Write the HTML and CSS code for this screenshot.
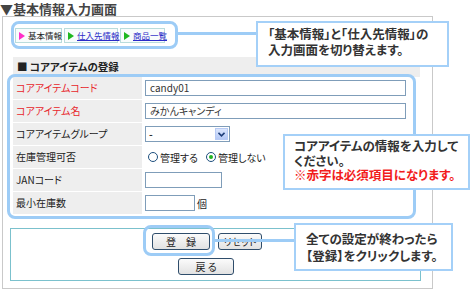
FILE: index.html
```html
<!DOCTYPE html>
<html lang="ja">
<head>
<meta charset="utf-8">
<link rel="stylesheet" href="styles.css">
</head>
<body>
<div class="page">
  <h1 class="title">▼基本情報入力画面</h1>
  <div class="panel">
    <div class="tabs">
      <span class="tab tab-1"><i class="tri tri-pink"></i>基本情報</span>
      <span class="tab tab-2"><i class="tri tri-green"></i><a>仕入先情報</a></span>
      <span class="tab tab-3"><i class="tri tri-green"></i><a>商品一覧</a></span>
    </div>

    <div class="section">
      <div class="section-head">■ コアアイテムの登録</div>
      <div class="form-table">
        <div class="row">
          <div class="label req">コアアイテムコード</div>
          <div class="value"><span class="input input-long">candy01</span></div>
        </div>
        <div class="row">
          <div class="label req">コアアイテム名</div>
          <div class="value"><span class="input input-long">みかんキャンディ</span></div>
        </div>
        <div class="row">
          <div class="label">コアアイテムグループ</div>
          <div class="value">
            <span class="select"><span class="select-text">-</span><span class="select-btn"><svg width="7" height="5" viewBox="0 0 7 5"><path d="M0.5 0.8 L3.5 3.8 L6.5 0.8" fill="none" stroke="#1f3f7a" stroke-width="1.6"/></svg></span></span>
          </div>
        </div>
        <div class="row">
          <div class="label">在庫管理可否</div>
          <div class="value radios">
            <span class="radio"></span><span class="radio-text">管理する</span>
            <span class="radio checked"></span><span class="radio-text">管理しない</span>
          </div>
        </div>
        <div class="row">
          <div class="label">JANコード</div>
          <div class="value"><span class="input input-jan"></span></div>
        </div>
        <div class="row">
          <div class="label">最小在庫数</div>
          <div class="value"><span class="input input-min"></span><span class="unit">個</span></div>
        </div>
      </div>
    </div>

    <div class="button-box">
      <div class="btn-row">
        <span class="btn btn-reg">登　録</span>
        <span class="btn btn-reset">リセット</span>
      </div>
      <div class="btn-row">
        <span class="btn btn-back">戻 る</span>
      </div>
    </div>
  </div>

  <div class="ring ring-tabs"></div>
  <div class="link link-1"></div>
  <div class="callout callout-1">「基本情報」と「仕入先情報」の<br>入力画面を切り替えます。</div>

  <div class="ring ring-form"></div>
  <div class="callout callout-2">コアアイテムの情報を入力して<br>ください。<br><span class="red">※赤字は必須項目になります。</span></div>

  <div class="ring ring-btn"></div>
  <div class="link link-3"></div>
  <div class="callout callout-3">全ての設定が終わったら<br>【登録】をクリックします。</div>
</div>
</body>
</html>
```

FILE: styles.css
```css
* { box-sizing: border-box; }
html, body { margin: 0; padding: 0; background: #fff; }
body {
  font-family: "Noto Sans CJK JP", "Noto Sans", sans-serif;
  font-feature-settings: "palt";
  color: #333;
}
.page {
  position: relative;
  width: 471px;
  height: 291px;
  overflow: hidden;
}
.title {
  margin: 0;
  height: 16px;
  font-size: 13px;
  line-height: 18px;
  font-weight: bold;
  color: #444;
}
.panel {
  margin-left: 2px;
  width: 431px;
  height: 273px;
  border: 1px solid #c9c9c9;
}

/* tabs */
.tabs {
  display: flex;
  gap: 1px;
  margin: 11px 0 0 12px;
  height: 15px;
}
.tab {
  display: flex;
  align-items: center;
  gap: 3px;
  height: 15px;
  padding: 0 3px;
  border: 1px solid #b9dcdc;
  background: #f8fcfc;
  font-size: 8.5px;
  line-height: 13px;
  color: #222;
  white-space: nowrap;
}
.tab a { color: #2b2bc8; text-decoration: underline; }
.tab-1 { width: 47px; }
.tab-2 { width: 54px; margin-left: 1px; }
.tab-3 { width: 45px; margin-left: 1px; }
.tri {
  display: inline-block;
  flex: none;
  width: 0; height: 0;
  border-top: 4px solid transparent;
  border-bottom: 4px solid transparent;
  border-left: 6px solid #ff2fc8;
}
.tri-green { border-left-color: #1fb81f; }

/* section */
.section {
  margin: 14px 0 0 10px;
  width: 407px;
  background: #eeeeee;
}
.section-head {
  height: 20px;
  padding-left: 4px;
  font-size: 10.5px;
  line-height: 20px;
  font-weight: bold;
  color: #222;
}
.form-table {
  display: flex;
  flex-direction: column;
  gap: 1px;
  background: #fff;
}
.row {
  display: grid;
  grid-template-columns: 129px 1fr;
  height: 22px;
}
.label {
  background: #eeeeee;
  padding-left: 3px;
  font-size: 10px;
  line-height: 22px;
  color: #222;
}
.label.req { color: #e8262b; }
.value {
  background: #fff;
  padding-left: 3px;
  display: flex;
  align-items: center;
}
.input {
  display: inline-block;
  height: 16px;
  border: 1px solid #7f9db9;
  background: #fff;
  padding-left: 4px;
  font-size: 10px;
  line-height: 14px;
  color: #333;
}
.input-long { width: 261px; }
.input-jan { width: 77px; }
.input-min { width: 50px; }
.unit { font-size: 10px; margin-left: 2px; color: #222; }
.select {
  display: flex;
  width: 85px;
  height: 16px;
  border: 1px solid #7f9db9;
  background: #fff;
}
.select-text {
  flex: 1;
  padding-left: 3px;
  font-size: 10px;
  line-height: 13px;
  font-weight: bold;
}
.select-btn {
  width: 13px;
  margin: 1px;
  background: linear-gradient(#dbe6fd, #b5c9f6);
  border: 1px solid #b8cbf5;
  display: flex;
  align-items: center;
  justify-content: center;
}
.radios { padding-left: 6px; }
.radio {
  width: 10px; height: 10px;
  border: 1px solid #1d4f7e;
  border-radius: 50%;
  background: #fff;
  display: inline-flex;
  align-items: center;
  justify-content: center;
}
.radio.checked::after {
  content: "";
  width: 4px; height: 4px;
  border-radius: 50%;
  background: #22b422;
}
.radio-text {
  font-size: 10px;
  margin-left: 2px;
  margin-right: 8px;
  color: #222;
}

/* buttons */
.button-box {
  margin: 14px 0 0 7px;
  width: 411px;
  height: 53px;
  border: 1px solid #7bc1cd;
  padding: 4px 0 0 141px;
  display: flex;
  flex-direction: column;
  gap: 8px;
}
.btn-row { display: flex; gap: 8px; }
.btn {
  display: inline-flex;
  align-items: center;
  justify-content: center;
  height: 17px;
  border: 1px solid #2f4d6b;
  border-radius: 3px;
  background: linear-gradient(#fbfbfb, #e2e2e2);
  font-size: 10px;
  color: #222;
}
.btn-reg { width: 58px; }
.btn-reset { width: 44px; }
.btn-back { width: 56px; margin-left: 26px; }

/* annotation overlays */
.ring {
  position: absolute;
  border: 3px solid #9dccf6;
  border-radius: 8px;
}
.ring-tabs { left: 11px; top: 21px; width: 167px; height: 28px; }
.ring-form { left: 7px; top: 74px; width: 409px; height: 145px; }
.ring-btn { left: 143px; top: 225px; width: 72px; height: 31px; }
.link {
  position: absolute;
  height: 3px;
  background: #9dccf6;
}
.link-1 { left: 177px; top: 32px; width: 80px; }
.link-3 { left: 214px; top: 239px; width: 81px; }
.callout {
  position: absolute;
  background: #fff;
  border: 2px solid #a4d0f8;
  font-size: 12.5px;
  font-weight: bold;
  color: #333;
  white-space: nowrap;
}
.callout-1 {
  left: 256px; top: 21px; width: 193px; height: 46px;
  padding: 3px 0 0 10px;
  line-height: 16px;
}
.callout-2 {
  left: 283px; top: 134px; width: 187px; height: 56px;
  padding: 3px 0 0 9px;
  line-height: 14.5px;
}
.callout-3 {
  left: 294px; top: 223px; width: 159px; height: 48px;
  padding: 5px 0 0 10px;
  line-height: 17px;
}
.red { color: #f21c1c; }
```
